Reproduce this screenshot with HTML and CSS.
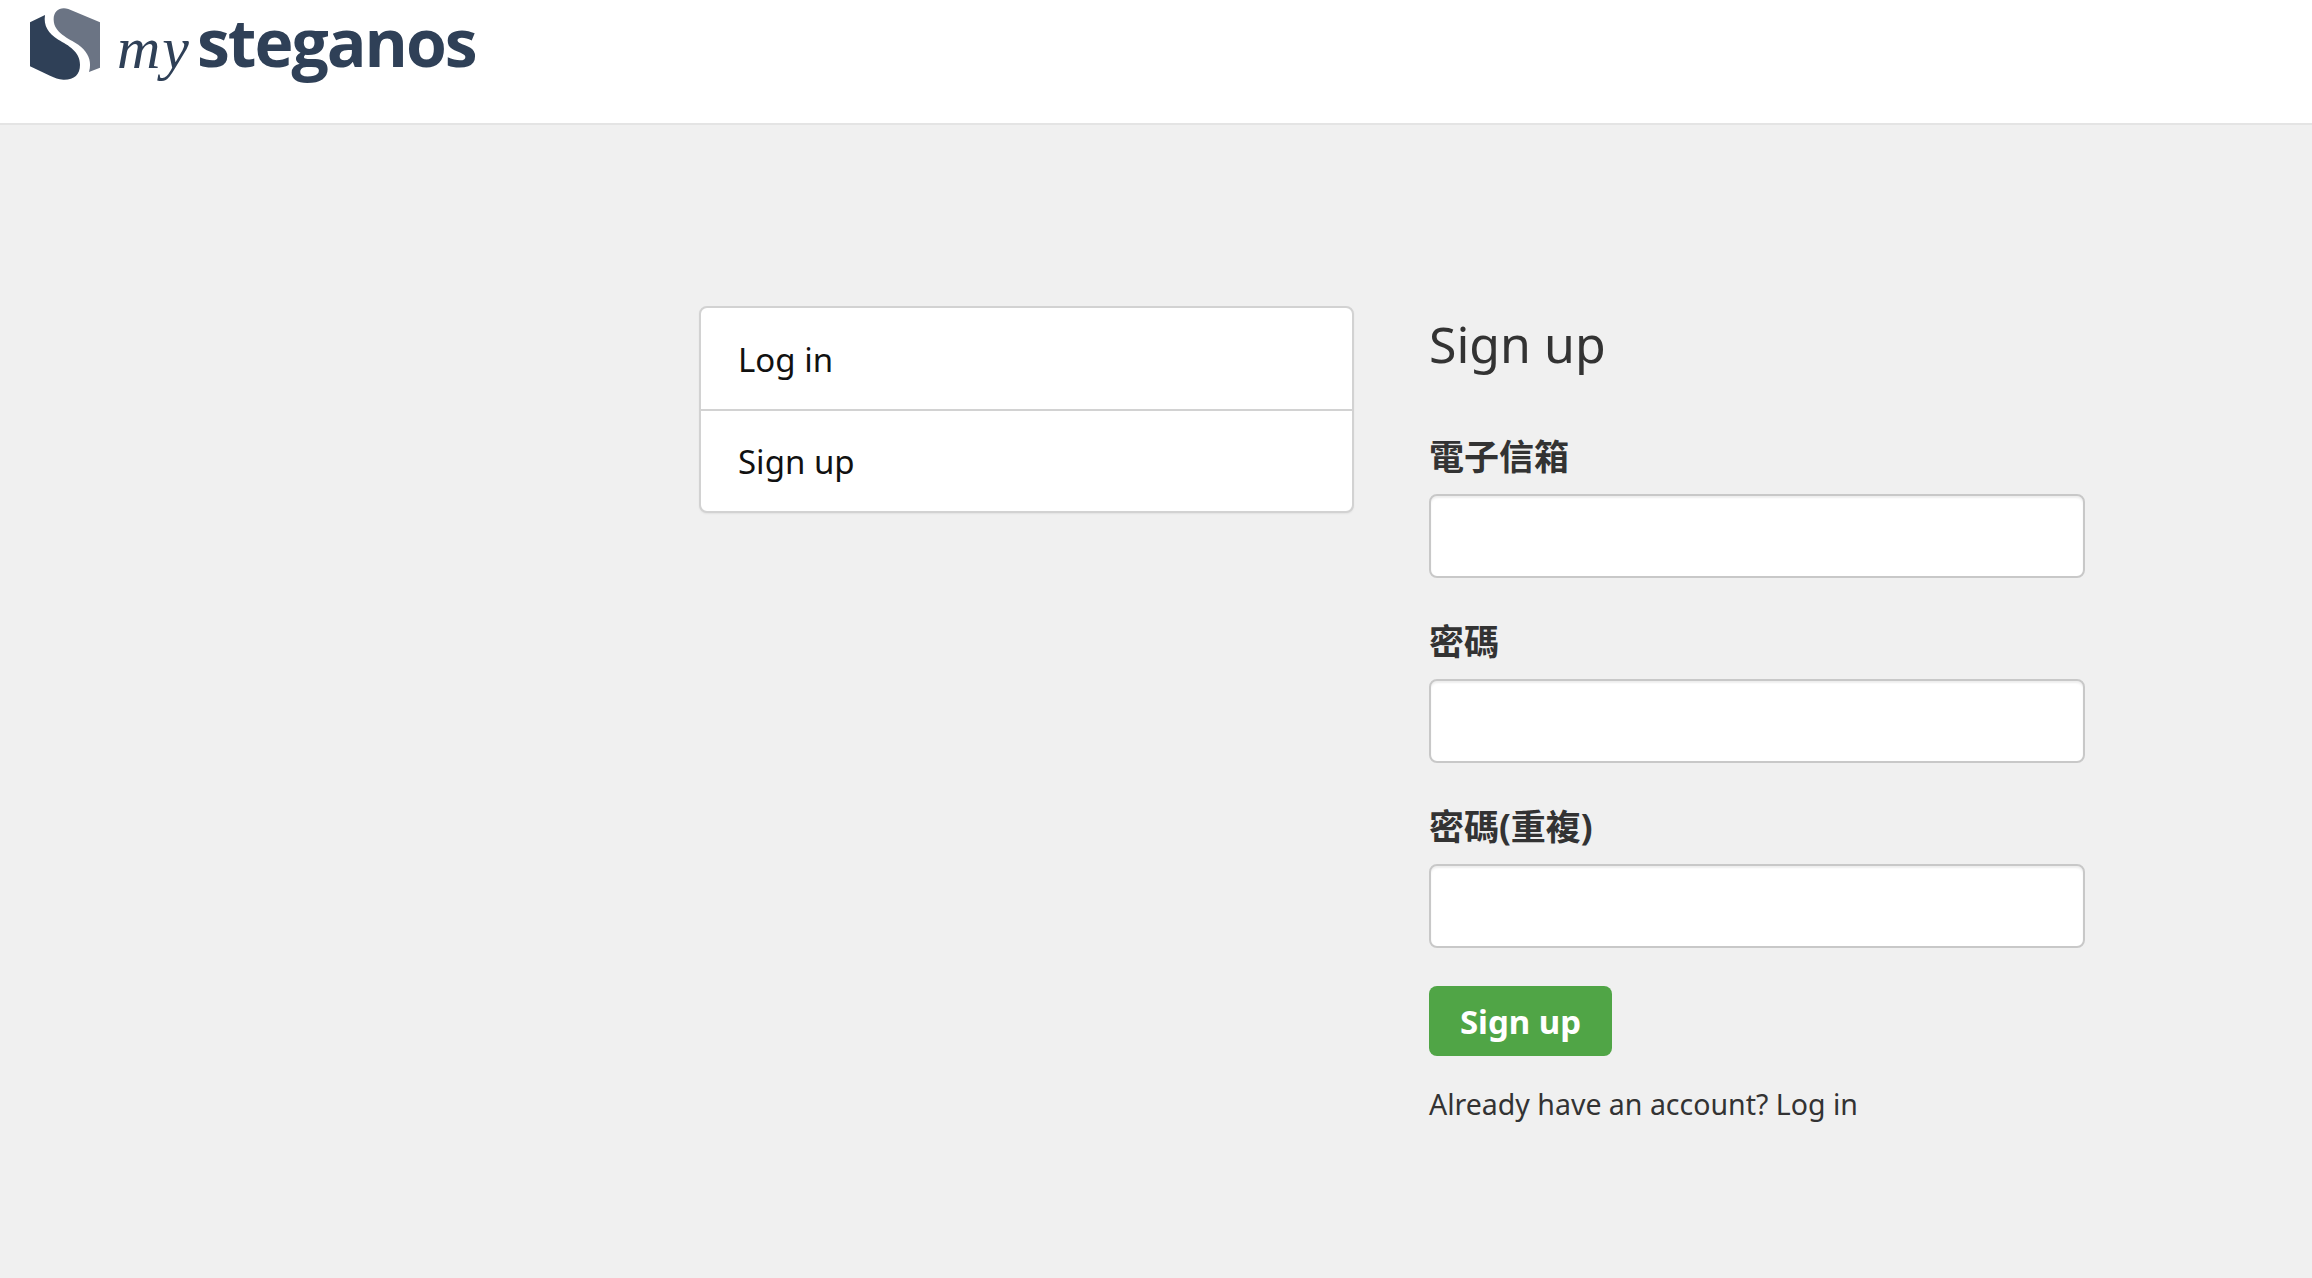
FILE: index.html
```html
<!DOCTYPE html>
<html lang="zh-Hant">
<head>
<meta charset="utf-8">
<title>mySteganos</title>
<link rel="stylesheet" href="styles.css">
</head>
<body>
<header class="topbar">
  <a class="brand" href="#">
    <svg class="brand-mark" viewBox="90 25 210 216" aria-hidden="true">
      <path class="mark-dark" d="M90 68 L135 46 C130 78 145 102 175 120 C205 137 240 155 240 195 C240 225 222 241 190 240 C175 239 165 234 150 228 L90 200 Z"/>
      <path class="mark-light" d="M161 60 C160 36 178 20 205 28 L300 68 L300 204 L267 217 C276 185 266 158 235 135 C205 115 162 100 161 60 Z"/>
    </svg>
    <span class="brand-my">my</span><span class="brand-name">steganos</span>
  </a>
</header>
<main class="page">
  <nav class="side-list">
    <a class="side-item" href="#">Log in</a>
    <a class="side-item" href="#">Sign up</a>
  </nav>
  <section class="signup">
    <h3 class="signup-title">Sign up</h3>
    <form class="signup-form">
      <div class="field">
        <label class="field-label" for="email">電子信箱</label>
        <input class="field-input" id="email" type="email">
      </div>
      <div class="field">
        <label class="field-label" for="password">密碼</label>
        <input class="field-input" id="password" type="password">
      </div>
      <div class="field">
        <label class="field-label" for="password2">密碼(重複)</label>
        <input class="field-input" id="password2" type="password">
      </div>
      <button class="submit" type="button">Sign up</button>
    </form>
    <p class="login-hint">Already have an account? <a class="login-link" href="#">Log in</a></p>
  </section>
</main>
</body>
</html>
```
FILE: styles.css
```css
* { box-sizing: border-box; }
html, body { margin: 0; height: 100%; }
body {
  background: #f0f0f0;
  color: #333;
  font-family: "Noto Sans", "Noto Sans CJK TC", sans-serif;
  font-size: 28.5px;
  line-height: 40px;
}
a { color: inherit; text-decoration: none; }

.topbar {
  height: 125px;
  background: #fff;
  border-bottom: 2px solid #e4e4e4;
  padding: 8px 0 0 30px;
}
.brand { display: flex; align-items: flex-start; color: #2f4057; }
.brand-mark { width: 70px; height: 72px; flex: none; }
.mark-dark { fill: #2f4057; }
.mark-light { fill: #6b7484; }
.brand-my {
  margin: 4px 6px 0 17px;
  font-family: "Liberation Serif", serif;
  font-style: italic;
  font-size: 60px;
  line-height: 72px;
  letter-spacing: 2px;
}
.brand-name {
  margin-top: -3px;
  font-family: "Open Sans", sans-serif;
  font-weight: 700;
  font-size: 66px;
  line-height: 72px;
  letter-spacing: -2px;
}

.page {
  display: flex;
  align-items: flex-start;
  gap: 75px;
  padding: 181px 0 0 699px;
}
.side-list {
  width: 655px;
  background: #fff;
  border: 2px solid #d2d2d2;
  border-radius: 8px;
  box-shadow: 0 1px 2px rgba(0,0,0,.06);
}
.side-item {
  display: block;
  height: 101px;
  padding: 30px 37px 0;
  color: #111;
  font-size: 33px;
  line-height: 44px;
}
.side-item + .side-item { border-top: 2px solid #d2d2d2; height: 102px; padding-top: 29px; }

.signup { width: 656px; }
.signup-title {
  margin: 0 0 58px;
  padding-top: 6px;
  font-size: 50px;
  line-height: 64px;
  font-weight: 400;
}
.field { margin-bottom: 41px; }
.field:last-of-type { margin-bottom: 38px; }
.field-label {
  display: block;
  margin-bottom: 14px;
  font-size: 35px;
  line-height: 46px;
  font-weight: 700;
}
.field-input {
  display: block;
  width: 100%;
  height: 84px;
  background: #fff;
  border: 2px solid #c8c8c8;
  border-radius: 8px;
  box-shadow: inset 0 2px 2px rgba(0,0,0,.07);
}
.submit {
  display: block;
  width: 183px;
  height: 70px;
  padding: 0;
  background: #50a546;
  border: 0;
  border-radius: 8px;
  color: #fff;
  font-family: inherit;
  font-size: 33px;
  font-weight: 700;
}
.login-hint { margin: 28px 0 0; }
```
